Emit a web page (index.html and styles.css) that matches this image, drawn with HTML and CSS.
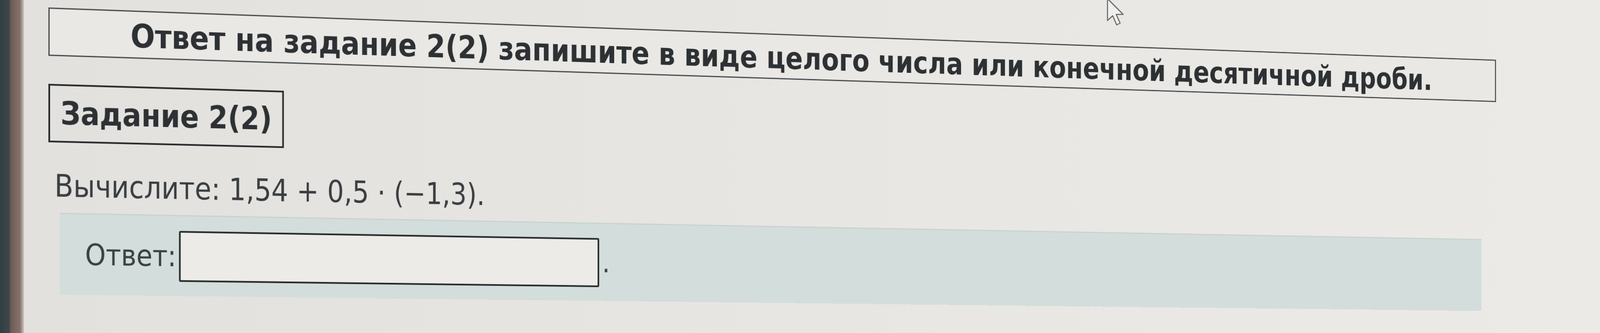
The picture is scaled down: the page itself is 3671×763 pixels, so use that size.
FILE: index.html
```html
<!DOCTYPE html>
<html lang="ru">

<head>
    <meta charset="UTF-8">
    <meta name="viewport" content="width=device-width, initial-scale=1.0">
    <title>Задание 2(2)</title>
    <link rel="stylesheet" href="styles.css">
</head>

<body>

    <div class="monitor">
        <!-- Monitor frame on the left -->
        <div class="bezel"></div>

        <div class="screen">
            <div class="page">
                <!-- Instruction -->
                <div class="notice">Ответ на задание 2(2) запишите в виде целого числа или конечной десятичной дроби.</div>

                <!-- Task -->
                <h2 class="task-title">Задание 2(2)</h2>
                <p class="task-text">Вычислите: 1,54 + 0,5 · (−1,3).</p>

                <!-- Answer row -->
                <div class="answer">
                    <label for="answer-input">Ответ:</label>
                    <input type="text" id="answer-input">
                    <span class="dot">.</span>
                </div>
            </div>

            <!-- Mouse pointer -->
            <svg class="cursor" width="44" height="70" viewBox="0 0 44 70">
                <path d="M3 2 L3 52 L15 41 L24 62 L32 58 L23 38 L39 38 Z" fill="#f1f0ed" stroke="#6a6d6f" stroke-width="2.5" stroke-linejoin="round" />
            </svg>
        </div>
    </div>

</body>

</html>
```

FILE: styles.css
```css
html,
body {
    margin: 0;
    padding: 0;
    height: 100%;
    overflow: hidden;
}

body {
    font-family: "DejaVu Sans Condensed", "DejaVu Sans", sans-serif;
    font-stretch: condensed;
    background: #e6e5e2;
    color: #33373a;
}

.monitor {
    display: flex;
    height: 100vh;
}

.bezel {
    width: 55px;
    flex-shrink: 0;
    background: linear-gradient(to right, #323d43 0, #3d474c 21px, #6f5b55 25px, #86726c 46px, #cdc7c2 55px);
}

.screen {
    flex: 1;
    position: relative;
    overflow: hidden;
    background: linear-gradient(to right, #e2e1de, #e8e7e4 60%, #eceae7);
}

/* the photo is taken at an angle */
.page {
    width: 3900px;
    box-sizing: border-box;
    padding: 17px 0 0 56px;
    transform-origin: 56px 350px;
    transform: skewY(1.35deg) perspective(3000px) rotateY(6.42deg);
}

.notice {
    width: 3818px;
    height: 111px;
    box-sizing: border-box;
    border: 3px solid #4d5154;
    display: flex;
    align-items: center;
    justify-content: center;
    padding-top: 8px;
    font-size: 75px;
    font-weight: bold;
    line-height: 1;
    color: #2d3134;
    background: #e9e8e5;
}

.task-title {
    width: fit-content;
    height: 134px;
    box-sizing: border-box;
    margin: 64px 0 0 0;
    padding: 0 24px;
    border: 4px solid #2a2e30;
    font-size: 73px;
    line-height: 126px;
    font-weight: bold;
    color: #2d3134;
}

.task-text {
    margin: 60px 0 0 14px;
    font-size: 71px;
    line-height: 80px;
    color: #3a3e41;
}

.answer {
    width: 3748px;
    height: 188px;
    box-sizing: border-box;
    margin: 21px 0 0 26px;
    padding-left: 59px;
    display: flex;
    align-items: center;
    background: #d3dddc;
    border-top: 3px solid #c9d3d2;
    font-size: 68px;
    line-height: 80px;
    color: #3b4043;
}

.answer input {
    width: 1030px;
    height: 118px;
    box-sizing: border-box;
    margin: 0 8px 0 6px;
    border: 4px solid #2a2e30;
    border-radius: 4px;
    background: #ecebe8;
}

.cursor {
    position: absolute;
    left: 2483px;
    top: -5px;
}
```
